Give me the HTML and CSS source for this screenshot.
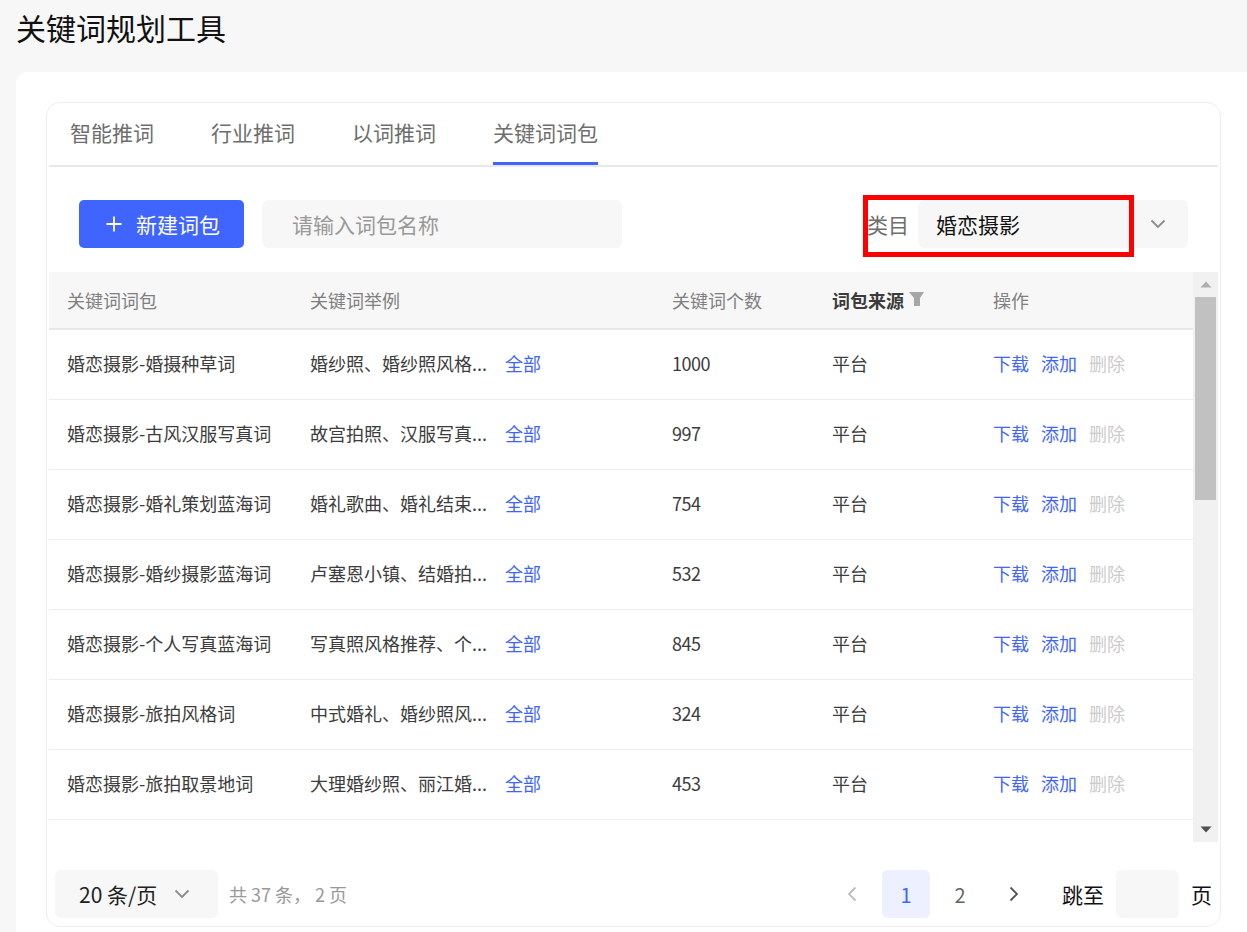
FILE: index.html
```html
<!DOCTYPE html>
<html lang="zh-CN">
<head>
    <meta charset="UTF-8">
    <meta name="viewport" content="width=device-width, initial-scale=1.0">
    <title>关键词规划工具</title>
    <link rel="stylesheet" href="styles.css">
</head>
<body>
    <h1 class="page-title">关键词规划工具</h1>
    <div class="card">
        <div class="panel">
            <div class="tabs">
                <a class="tab">智能推词</a>
                <a class="tab">行业推词</a>
                <a class="tab">以词推词</a>
                <a class="tab active">关键词词包</a>
            </div>

            <div class="toolbar">
                <button class="add-btn">
                    <svg width="16" height="16" viewBox="0 0 16 16"><path d="M8 0.5v15M0.5 8h15" stroke="#fff" stroke-width="1.8" fill="none"/></svg>
                    <span>新建词包</span>
                </button>
                <div class="search">请输入词包名称</div>
                <div class="category">
                    <span class="category-label">类目</span>
                    <div class="select">
                        <span>婚恋摄影</span>
                        <svg width="16" height="10" viewBox="0 0 16 10"><path d="M1.5 1.5L8 8l6.5-6.5" stroke="#8c8c8c" stroke-width="1.8" fill="none"/></svg>
                    </div>
                    <div class="highlight"></div>
                </div>
            </div>

            <div class="table-wrap">
                <div class="table">
                    <div class="row head">
                        <div>关键词词包</div>
                        <div>关键词举例</div>
                        <div>关键词个数</div>
                        <div class="source">词包来源
                            <svg class="filter" width="15" height="14" viewBox="0 0 15 14"><path d="M0 0h15L11 6V14H5V6z" fill="#a6a6a6"/></svg>
                        </div>
                        <div>操作</div>
                    </div>
                    <div class="row">
                        <div>婚恋摄影-婚摄种草词</div>
                        <div class="sample"><span class="sample-text">婚纱照、婚纱照风格...</span><a class="link">全部</a></div>
                        <div class="num">1000</div>
                        <div>平台</div>
                        <div class="actions"><a class="link">下载</a><a class="link">添加</a><a class="off">删除</a></div>
                    </div>
                    <div class="row">
                        <div>婚恋摄影-古风汉服写真词</div>
                        <div class="sample"><span class="sample-text">故宫拍照、汉服写真...</span><a class="link">全部</a></div>
                        <div class="num">997</div>
                        <div>平台</div>
                        <div class="actions"><a class="link">下载</a><a class="link">添加</a><a class="off">删除</a></div>
                    </div>
                    <div class="row">
                        <div>婚恋摄影-婚礼策划蓝海词</div>
                        <div class="sample"><span class="sample-text">婚礼歌曲、婚礼结束...</span><a class="link">全部</a></div>
                        <div class="num">754</div>
                        <div>平台</div>
                        <div class="actions"><a class="link">下载</a><a class="link">添加</a><a class="off">删除</a></div>
                    </div>
                    <div class="row">
                        <div>婚恋摄影-婚纱摄影蓝海词</div>
                        <div class="sample"><span class="sample-text">卢塞恩小镇、结婚拍...</span><a class="link">全部</a></div>
                        <div class="num">532</div>
                        <div>平台</div>
                        <div class="actions"><a class="link">下载</a><a class="link">添加</a><a class="off">删除</a></div>
                    </div>
                    <div class="row">
                        <div>婚恋摄影-个人写真蓝海词</div>
                        <div class="sample"><span class="sample-text">写真照风格推荐、个...</span><a class="link">全部</a></div>
                        <div class="num">845</div>
                        <div>平台</div>
                        <div class="actions"><a class="link">下载</a><a class="link">添加</a><a class="off">删除</a></div>
                    </div>
                    <div class="row">
                        <div>婚恋摄影-旅拍风格词</div>
                        <div class="sample"><span class="sample-text">中式婚礼、婚纱照风...</span><a class="link">全部</a></div>
                        <div class="num">324</div>
                        <div>平台</div>
                        <div class="actions"><a class="link">下载</a><a class="link">添加</a><a class="off">删除</a></div>
                    </div>
                    <div class="row">
                        <div>婚恋摄影-旅拍取景地词</div>
                        <div class="sample"><span class="sample-text">大理婚纱照、丽江婚...</span><a class="link">全部</a></div>
                        <div class="num">453</div>
                        <div>平台</div>
                        <div class="actions"><a class="link">下载</a><a class="link">添加</a><a class="off">删除</a></div>
                    </div>
                </div>
                <div class="scrollbar">
                    <div class="arrow"><svg width="12" height="7" viewBox="0 0 12 7"><path d="M6 0.5L11.5 6.5H0.5z" fill="#b0b0b0"/></svg></div>
                    <div class="track"><div class="thumb"></div></div>
                    <div class="arrow"><svg width="12" height="7" viewBox="0 0 12 7"><path d="M0.5 0.5H11.5L6 6.5z" fill="#505050"/></svg></div>
                </div>
            </div>

            <div class="pager">
                <div class="page-size">
                    <span>20 条/页</span>
                    <svg width="16" height="10" viewBox="0 0 16 10"><path d="M1.5 1.5L8 8l6.5-6.5" stroke="#8c8c8c" stroke-width="1.8" fill="none"/></svg>
                </div>
                <span class="total">共 37 条， 2 页</span>
                <div class="pages">
                    <a class="page-btn"><svg width="10" height="16" viewBox="0 0 10 16"><path d="M8.5 1.5L2 8l6.5 6.5" stroke="#bdbdbd" stroke-width="1.8" fill="none"/></svg></a>
                    <a class="page-btn current">1</a>
                    <a class="page-btn">2</a>
                    <a class="page-btn"><svg width="10" height="16" viewBox="0 0 10 16"><path d="M1.5 1.5L8 8l-6.5 6.5" stroke="#555" stroke-width="1.8" fill="none"/></svg></a>
                </div>
                <div class="jump">
                    <span>跳至</span>
                    <div class="jump-input"></div>
                    <span>页</span>
                </div>
            </div>
        </div>
    </div>
</body>
</html>
```

FILE: styles.css
```css
html, body {
    height: 100%;
}
body {
    margin: 0;
    height: 932px;
    overflow: hidden;
    background-color: #f7f7f7;
    font-family: "Noto Sans CJK SC", "Noto Sans", sans-serif;
    color: #3c3c3c;
}
.page-title {
    margin: 0;
    padding-left: 16px;
    height: 72px;
    font-size: 30px;
    font-weight: 400;
    line-height: 54px;
    color: #111;
}
.card {
    margin-left: 16px;
    height: 860px;
    padding: 30px 26px 0 30px;
    box-sizing: border-box;
    background: white;
    border-radius: 12px 0 0 0;
}
.panel {
    height: 825px;
    box-sizing: border-box;
    padding: 0 2px;
    border: 1px solid #eee;
    border-radius: 14px;
}

/* tabs */
.tabs {
    display: flex;
    gap: 57px;
    height: 62px;
    padding-left: 21px;
    border-bottom: 2px solid #e8e8e8;
}
.tab {
    height: 62px;
    box-sizing: border-box;
    font-size: 21px;
    line-height: 58px;
    color: #6e6e6e;
}
.tab.active {
    border-bottom: 3px solid #4065ff;
}

/* toolbar */
.toolbar {
    display: flex;
    align-items: center;
    height: 48px;
    margin-top: 33px;
    padding: 0 30px;
}
.add-btn {
    display: flex;
    align-items: center;
    gap: 14px;
    width: 165px;
    height: 48px;
    padding: 0 0 0 27px;
    border: none;
    border-radius: 5px;
    background: #4065ff;
    color: white;
    font-family: inherit;
    font-size: 21px;
}
.search {
    width: 360px;
    height: 48px;
    margin-left: 18px;
    padding-left: 30px;
    box-sizing: border-box;
    border-radius: 6px;
    background: #f7f7f7;
    color: #999;
    font-size: 21px;
    line-height: 48px;
}
.category {
    position: relative;
    display: flex;
    align-items: center;
    gap: 9px;
    margin-left: auto;
}
.category-label {
    font-size: 21px;
    color: #6e6e6e;
}
.select {
    display: flex;
    align-items: center;
    justify-content: space-between;
    width: 270px;
    height: 48px;
    padding: 0 22px 0 18px;
    box-sizing: border-box;
    border-radius: 6px;
    background: #f7f7f7;
    color: #111;
    font-size: 21px;
}
.highlight {
    position: absolute;
    left: -4px;
    top: -5px;
    width: 271px;
    height: 62px;
    box-sizing: border-box;
    border: 5px solid #f00;
}

/* table */
.table-wrap {
    display: flex;
    height: 570px;
    margin-top: 24px;
}
.table {
    flex: 1;
    overflow: hidden;
}
.row {
    display: grid;
    grid-template-columns: 243px 362px 160px 161px 1fr;
    align-items: center;
    height: 70px;
    padding-bottom: 4px;
    box-sizing: border-box;
    border-bottom: 1px solid #eee;
    font-size: 18px;
}
.row > div {
    padding-left: 18px;
}
.row.head {
    height: 58px;
    padding-bottom: 0;
    border-bottom: 2px solid #e8e8e8;
    background: #f7f7f7;
    color: #808080;
}
.row.head .source {
    display: flex;
    align-items: center;
    gap: 5px;
    font-weight: 700;
    color: #3c3c3c;
}
.filter {
    margin-top: -3px;
}
.sample {
    display: flex;
    align-items: center;
}
.sample-text {
    width: 195px;
    white-space: nowrap;
}
.num {
    letter-spacing: -0.5px;
}
.link {
    color: #4065ff;
}
.actions {
    display: flex;
    gap: 12px;
}
.off {
    color: #ccc;
}

/* scrollbar */
.scrollbar {
    display: flex;
    flex-direction: column;
    width: 25px;
    background: #f1f1f1;
}
.arrow {
    display: flex;
    align-items: center;
    justify-content: center;
    height: 25px;
    flex: none;
}
.track {
    flex: 1;
    padding: 0 2px;
}
.thumb {
    height: 203px;
    background: #c1c1c1;
}

/* pagination */
.pager {
    display: flex;
    align-items: center;
    height: 48px;
    margin-top: 28px;
    padding: 0 6px;
}
.page-size {
    display: flex;
    align-items: center;
    justify-content: space-between;
    width: 163px;
    height: 48px;
    padding: 0 28px 0 24px;
    box-sizing: border-box;
    border-radius: 6px;
    background: #f7f7f7;
    color: #222;
    font-size: 21px;
}
.total {
    margin-left: 11px;
    font-size: 18px;
    color: #999;
}
.pages {
    display: flex;
    gap: 6px;
    margin-left: auto;
}
.page-btn {
    display: flex;
    align-items: center;
    justify-content: center;
    width: 48px;
    height: 48px;
    border-radius: 6px;
    font-size: 20px;
    color: #666;
}
.page-btn.current {
    background: #ecf0ff;
    color: #4065ff;
}
.jump {
    display: flex;
    align-items: center;
    margin-left: 24px;
    font-size: 21px;
    color: #111;
}
.jump-input {
    width: 63px;
    height: 48px;
    margin: 0 12px;
    border-radius: 6px;
    background: #f7f7f7;
}
```
